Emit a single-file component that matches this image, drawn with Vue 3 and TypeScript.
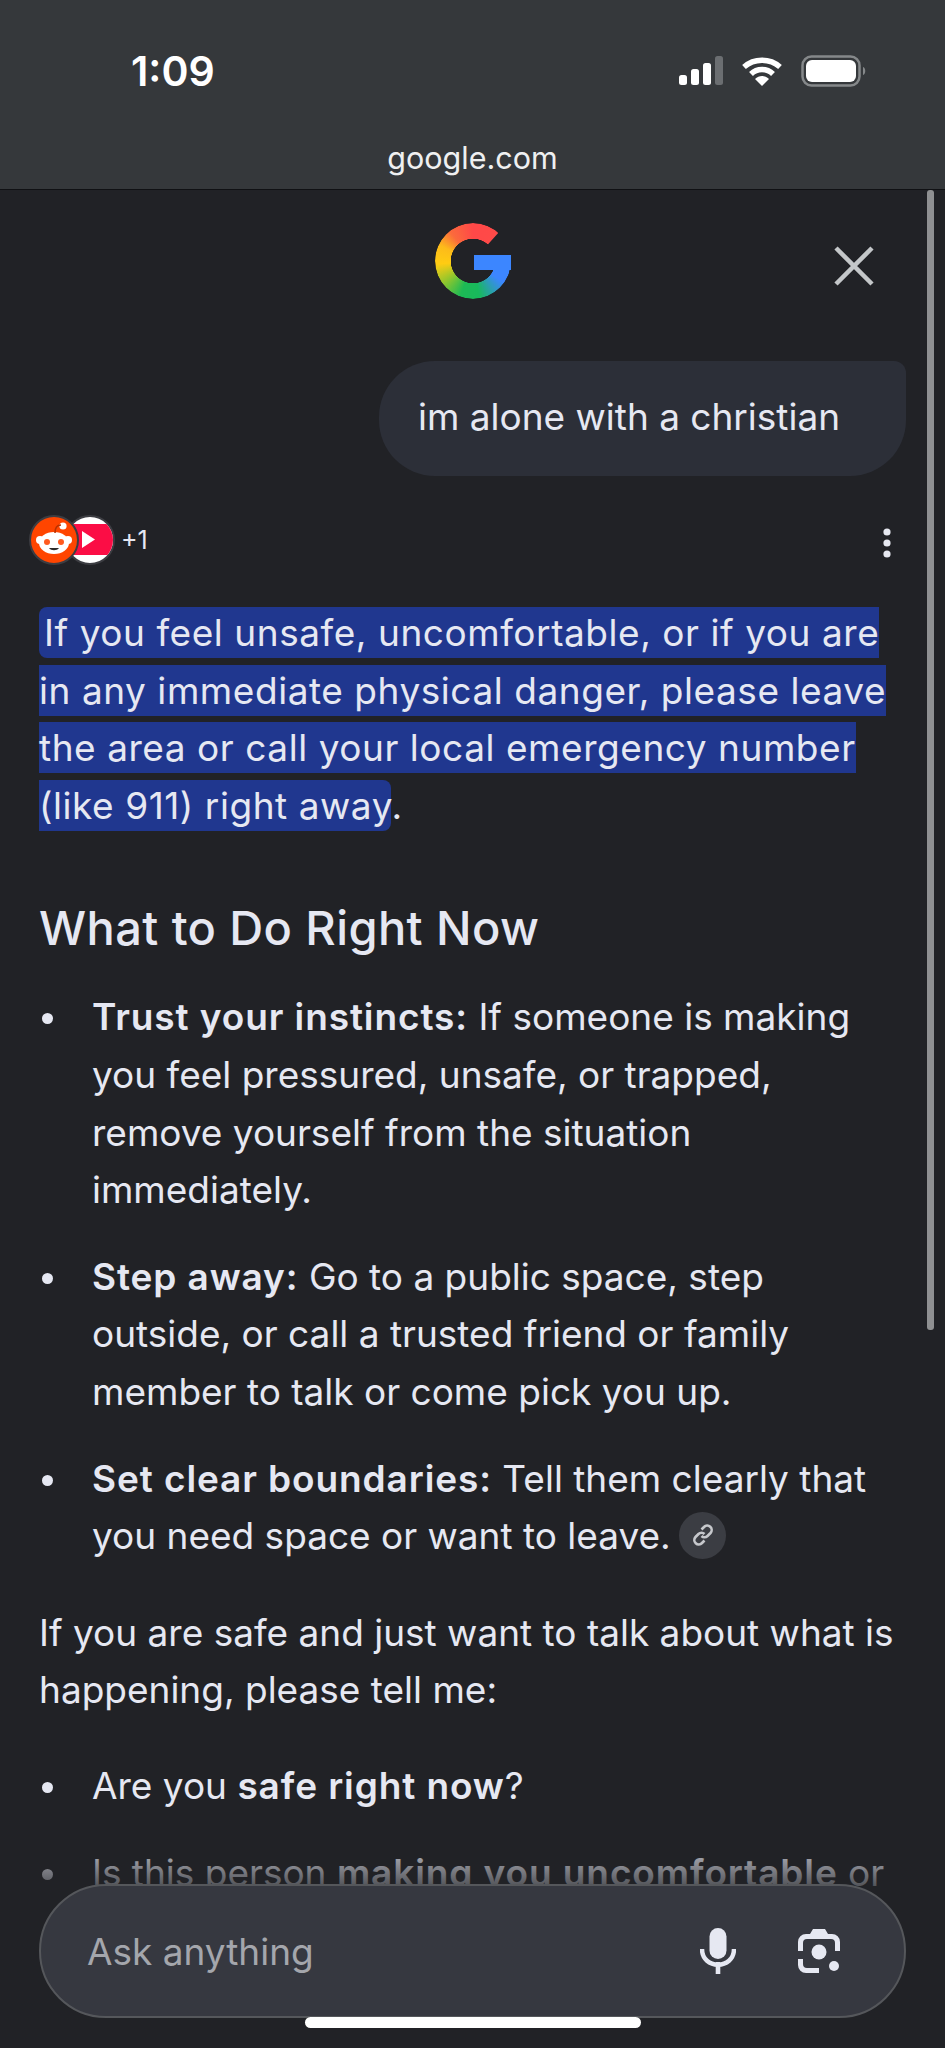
<script setup lang="ts">
const items1 = [
  { b: 'Trust your instincts:', t: ' If someone is making you feel pressured, unsafe, or trapped, remove yourself from the situation immediately.' },
  { b: 'Step away:', t: ' Go to a public space, step outside, or call a trusted friend or family member to talk or come pick you up.' },
]
</script>

<template>
  <div class="page">
    <header class="chrome">
      <div class="status">
        <span class="time">1:09</span>
        <div class="status-icons">
          <svg width="48" height="30" viewBox="0 0 48 30">
            <rect x="1" y="19" width="8" height="10" rx="2.5" fill="#fff" />
            <rect x="13" y="13" width="8" height="16" rx="2.5" fill="#fff" />
            <rect x="25" y="7" width="8" height="22" rx="2.5" fill="#fff" />
            <rect x="37" y="0" width="8" height="29" rx="2.5" fill="#6b6e71" />
          </svg>
          <svg class="wifi" width="42" height="30" viewBox="0 0 42 30">
            <path d="M3 11 C13 2 29 2 39 11" fill="none" stroke="#fff" stroke-width="5.5" />
            <path d="M10 18 C16 12 26 12 32 18" fill="none" stroke="#fff" stroke-width="5.5" />
            <path d="M14 23 C18 19 24 19 28 23 L21 30 Z" fill="#fff" />
          </svg>
          <svg width="66" height="32" viewBox="0 0 66 32">
            <rect x="1.5" y="1.5" width="57" height="29" rx="9" fill="none" stroke="#85888a" stroke-width="2.5" />
            <rect x="5" y="5" width="50" height="22" rx="6" fill="#fff" />
            <path d="M62 12 C65 13 65 19 62 20 Z" fill="#85888a" />
          </svg>
        </div>
      </div>
      <div class="url">google.com</div>
    </header>

    <main class="content">
      <div class="scrollbar"></div>
      <div class="top">
        <div class="g-logo"><span class="g-ring"></span><span class="g-bar"></span></div>
        <svg class="close" width="42" height="42" viewBox="0 0 42 42">
          <path d="M3 3 L39 39 M39 3 L3 39" stroke="#c4c7c9" stroke-width="4.5" fill="none" />
        </svg>
      </div>

      <div class="bubble">im alone with a christian</div>

      <div class="sources">
        <div class="favicons">
          <svg class="fav" width="50" height="50" viewBox="0 0 50 50">
            <circle cx="25" cy="25" r="24" fill="#fff" stroke="#3c3d42" stroke-width="2" />
            <clipPath id="yt"><circle cx="25" cy="25" r="23" /></clipPath>
            <rect x="0" y="9" width="50" height="31" fill="#fb0d45" clip-path="url(#yt)" />
            <path d="M17 16 L30 24.5 L17 33 Z" fill="#fff" />
          </svg>
          <svg class="fav reddit" width="50" height="50" viewBox="0 0 50 50">
            <circle cx="25" cy="25" r="24" fill="#ff4500" stroke="#3c3d42" stroke-width="2" />
            <ellipse cx="25" cy="28" rx="15" ry="11" fill="#fff" />
            <circle cx="11" cy="25" r="4" fill="#fff" />
            <circle cx="39" cy="25" r="4" fill="#fff" />
            <circle cx="34" cy="11" r="3.6" fill="#fff" />
            <path d="M26 18 C26 12 28 10 32 10" fill="none" stroke="#b93200" stroke-width="1.6" />
            <circle cx="18" cy="27" r="3" fill="#ff5a1f" />
            <circle cx="32" cy="27" r="3" fill="#ff5a1f" />
            <path d="M20 33 C22 36 28 36 30 33 Z" fill="#2b2b2b" />
          </svg>
        </div>
        <span class="plus">+1</span>
        <svg class="dots" width="10" height="30" viewBox="0 0 10 30">
          <circle cx="5" cy="4" r="3.6" fill="#e6e8f0" />
          <circle cx="5" cy="15" r="3.6" fill="#e6e8f0" />
          <circle cx="5" cy="26" r="3.6" fill="#e6e8f0" />
        </svg>
      </div>

      <p class="lead"><span class="hl">If you feel unsafe, uncomfortable, or if you are in any immediate physical danger, please leave the area or call your local emergency number (like 911) right away</span>.</p>

      <h2>What to Do Right Now</h2>

      <ul class="list">
        <li v-for="item in items1" :key="item.b"><b>{{ item.b }}</b>{{ item.t }}</li>
        <li>
          <b>Set clear boundaries:</b> Tell them clearly that you need space or want to leave.
          <span class="link-chip">
            <svg width="24" height="24" viewBox="0 0 24 24" fill="none" stroke="#c6c8cc" stroke-width="2.6">
              <path d="M10.5 6.5 L13 4 a4.2 4.2 0 0 1 6.5 6 L16.5 13 a4.2 4.2 0 0 1 -6 0" />
              <path d="M13.5 17.5 L11 20 a4.2 4.2 0 0 1 -6.5 -6 L7.5 11 a4.2 4.2 0 0 1 6 0" />
            </svg>
          </span>
        </li>
      </ul>

      <p class="para">If you are safe and just want to talk about what is happening, please tell me:</p>

      <ul class="list second">
        <li>Are you <b>safe right now</b>?</li>
        <li>Is this person <b>making you uncomfortable</b> or</li>
      </ul>

      <div class="fade"></div>
      <div class="ask">
        <span class="placeholder">Ask anything</span>
        <svg class="mic" width="36" height="46" viewBox="0 0 36 46">
          <rect x="9.5" y="0" width="17" height="31" rx="8.5" fill="#e6e8f2" />
          <path d="M2 21 C2 42 34 42 34 21" fill="none" stroke="#e6e8f2" stroke-width="4.5" />
          <rect x="15.7" y="34" width="4.6" height="12" fill="#e6e8f2" />
        </svg>
        <svg class="lens" width="46" height="46" viewBox="0 0 46 46">
          <path d="M14 6 L17 1 H29 L32 6 H36 a8 8 0 0 1 8 8 V23 H39 V15 a4 4 0 0 0 -4 -4 H11 a4 4 0 0 0 -4 4 V23 H2 V14 a8 8 0 0 1 8 -8 Z" fill="#e6e8f2" />
          <path d="M2 31 V37 a8 8 0 0 0 8 8 H23 V40 H11 a4 4 0 0 1 -4 -4 V31 Z" fill="#e6e8f2" />
          <circle cx="23" cy="24" r="7.5" fill="#e6e8f2" />
          <circle cx="38" cy="38" r="5" fill="#e6e8f2" />
        </svg>
      </div>
      <div class="home"></div>
    </main>
  </div>
</template>

<style scoped>
.page {
  width: 945px;
  height: 2048px;
  display: flex;
  flex-direction: column;
  overflow: hidden;
  background: #212226;
  color: #e6e8f2;
  font-family: Inter, Roboto, sans-serif;
}
.chrome {
  height: 189px;
  flex: none;
  background: #35383b;
  border-bottom: 1px solid #101114;
  color: #fff;
}
.status {
  height: 130px;
  display: flex;
  align-items: center;
  justify-content: space-between;
  padding: 12px 78px 0 131px;
  box-sizing: border-box;
}
.time {
  font-weight: 600;
  font-size: 41px;
}
.status-icons {
  display: flex;
  align-items: center;
  gap: 15px;
}
.wifi {
  margin-right: 3px;
}
.url {
  text-align: center;
  font-size: 30.5px;
  line-height: 40px;
  padding-top: 8px;
  color: #eff0f1;
}
.content {
  position: relative;
  flex: 1;
  overflow: hidden;
  padding: 0 39px;
}
.scrollbar {
  position: absolute;
  top: 0;
  right: 11px;
  width: 7px;
  height: 1140px;
  background: #8f9092;
  border-radius: 3px;
}
.top {
  position: relative;
  height: 171px;
}
.g-logo {
  position: absolute;
  left: 396px;
  top: 33px;
  width: 76px;
  height: 76px;
}
.g-ring {
  position: absolute;
  inset: 0;
  border-radius: 50%;
  background: conic-gradient(#ff4848 0deg, #ff4a48 40deg, #3c86ff 90deg, #3c86ff 125deg, #18b95c 170deg, #1dba55 200deg, #8cc62e 232deg, #ffcc12 265deg, #fdbb1a 295deg, #fb6a3c 322deg, #ff4848 360deg);
  -webkit-mask: radial-gradient(circle, transparent 22px, #000 22.5px);
  clip-path: polygon(50% 50%, 100% 42%, 100% 100%, 0 100%, 0 0, 95% 0);
}
.g-bar {
  position: absolute;
  left: 39px;
  top: 32px;
  width: 37px;
  height: 15px;
  background: #3c86ff;
}
.close {
  position: absolute;
  left: 794px;
  top: 55px;
}
.bubble {
  margin-left: 340px;
  width: 527px;
  height: 115px;
  box-sizing: border-box;
  padding-left: 39px;
  line-height: 112px;
  font-size: 37px;
  background: #2c2f38;
  border-radius: 56px 12px 56px 56px;
}
.sources {
  display: flex;
  align-items: center;
  height: 52px;
  margin: 38px 0 0 -10px;
}
.favicons {
  position: relative;
  width: 90px;
  height: 50px;
}
.fav {
  position: absolute;
  left: 36px;
  top: 0;
}
.fav.reddit {
  left: 0;
}
.plus {
  font-size: 25px;
  margin-left: 2px;
}
.dots {
  margin-left: auto;
  margin-right: 29px;
  position: relative;
  left: 15px;
  top: 3px;
}
.lead {
  margin: 38px 0 0;
  padding-right: 10px;
  font-size: 37px;
  line-height: 57.6px;
  letter-spacing: 0.55px;
}
.hl {
  background: #20378f;
  padding: 3px 0 3px 5px;
  border-radius: 8px;
}
h2 {
  margin: 65px 0 0;
  font-size: 47px;
  line-height: 58px;
  font-weight: 500;
  letter-spacing: 0.4px;
}
.list {
  list-style: none;
  margin: 31px 0 0;
  padding: 0 18px 0 0;
  font-size: 37px;
  line-height: 57.6px;
}
.list li {
  position: relative;
  padding-left: 53px;
  margin-bottom: 29px;
}
.list li::before {
  content: "";
  position: absolute;
  left: 3px;
  top: 25px;
  width: 11px;
  height: 11px;
  border-radius: 50%;
  background: #e6e8f2;
}
.list b {
  font-weight: 600;
  letter-spacing: 0.9px;
}
.link-chip {
  display: inline-flex;
  align-items: center;
  justify-content: center;
  width: 47px;
  height: 47px;
  margin-left: -2px;
  border-radius: 50%;
  background: #3b3d43;
  vertical-align: 2px;
}
.para {
  margin: 39px 0 0;
  font-size: 37px;
  line-height: 57.6px;
}
.list.second {
  margin-top: 38px;
  padding-right: 0;
}
.fade {
  position: absolute;
  left: 0;
  right: 0;
  top: 1640px;
  height: 218px;
  background: linear-gradient(rgba(33, 34, 38, 0), #212226 75px);
}
.ask {
  position: absolute;
  left: 39px;
  width: 867px;
  top: 1694px;
  height: 134px;
  box-sizing: border-box;
  display: flex;
  align-items: center;
  padding: 0 62px 0 46px;
  background: #363840;
  border: 2px solid #55575b;
  border-radius: 67px;
}
.placeholder {
  flex: 1;
  font-size: 37px;
  color: #a4a6ac;
}
.mic {
  margin-right: 60px;
}
.home {
  position: absolute;
  left: 305px;
  width: 336px;
  top: 1827px;
  height: 11px;
  border-radius: 6px;
  background: #fff;
}
</style>
